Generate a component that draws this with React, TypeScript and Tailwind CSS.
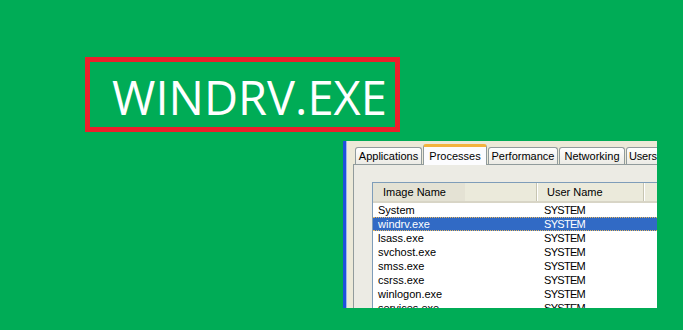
import React from 'react';

const processes = [
  { name: 'System', user: 'SYSTEM' },
  { name: 'windrv.exe', user: 'SYSTEM', selected: true },
  { name: 'lsass.exe', user: 'SYSTEM' },
  { name: 'svchost.exe', user: 'SYSTEM' },
  { name: 'smss.exe', user: 'SYSTEM' },
  { name: 'csrss.exe', user: 'SYSTEM' },
  { name: 'winlogon.exe', user: 'SYSTEM' },
  { name: 'services.exe', user: 'SYSTEM' },
];

const tabs = [
  { label: 'Applications', w: 'w-[67px]' },
  { label: 'Processes', w: 'w-[64px]', active: true },
  { label: 'Performance', w: 'w-[70px]' },
  { label: 'Networking', w: 'w-[66px]' },
  { label: 'Users', w: 'w-[44px]', left: true },
];

const xpFont = { fontFamily: '"Liberation Sans", Arial, sans-serif' };

const Tab: React.FC<{ label: string; w: string; active?: boolean; left?: boolean }> = ({ label, w, active, left }) =>
  active ? (
    <div className={`${w} h-[21px] -mb-px z-10 shrink-0 rounded-t-[3px] border-x border-[#919b9c] border-t-[3px] border-t-[#f3b33d] bg-[#fcfcfe] flex items-start justify-center pt-[1px] text-[11px] text-black`}>
      {label}
    </div>
  ) : (
    <div
      className={`${w} h-[17px] shrink-0 rounded-t-[3px] border border-b-0 border-[#919b9c] bg-gradient-to-b from-white to-[#ecebe5] flex items-center pt-[1px] text-[11px] text-black ${
        left ? 'justify-start pl-[2px] tracking-[-0.2px]' : 'justify-center'
      }`}
    >
      {label}
    </div>
  );

const TaskManager: React.FC = () => (
  <div className="ml-[343px] mt-[9px] w-[314px] h-[167px] overflow-hidden flex" style={xpFont}>
    <div className="w-[3px] bg-[#1d51dc] shrink-0" />
    <div className="w-px bg-[#9fb5ee] shrink-0" />
    <div className="flex-1 bg-[#ece9d8] flex flex-col pl-[6px] pt-[3px] min-w-0">
      <div className="h-[20px] flex items-end gap-px pl-[2px] shrink-0">
        {tabs.map((t) => (
          <Tab key={t.label} {...t} />
        ))}
      </div>
      <div className="flex-1 border-l border-t border-[#919b9c] bg-[#ecebe4] pl-[18px] pt-[17px]">
        <div className="w-[320px] border border-[#7f9db9] bg-white">
          <div className="h-[20px] flex text-[11px] text-black bg-[#ebeadb] border-b-[2px] border-[#d8d5c6]">
            <div className="w-[164px] flex border-r border-[#c7c5b2]">
              <div className="w-[92px] pl-[10px] flex items-center bg-[#e4e2d4]">Image Name</div>
            </div>
            <div className="w-px bg-white" />
            <div className="w-[106px] pl-[9px] flex items-center border-r border-[#c7c5b2]">User Name</div>
            <div className="w-px bg-white" />
          </div>
          {processes.map((p) => (
            <div
              key={p.name}
              className={`h-[14px] flex items-center text-[11px] leading-none ${
                p.selected
                  ? 'bg-[#316ac5] text-white border-y border-dotted border-[#e8b860]'
                  : 'text-[#000]'
              }`}
            >
              <div className="w-[165px] pl-[5px]">{p.name}</div>
              <div className="pl-[6px] tracking-[-0.7px]">{p.user}</div>
            </div>
          ))}
        </div>
      </div>
    </div>
  </div>
);

export default function App() {
  return (
    <div className="w-[683px] h-[330px] bg-[#00ac56] overflow-hidden flex flex-col">
      <div className="ml-[85px] mt-[57px] w-[315px] h-[75px] border-[5px] border-[#ec1f2b] flex items-center pl-[22px] pt-[6px] shrink-0">
        <span
          className="text-white text-[47px] leading-none font-normal"
          style={{ fontFamily: '"Open Sans", "Noto Sans", sans-serif' }}
        >
          WINDRV.EXE
        </span>
      </div>
      <TaskManager />
    </div>
  );
}
